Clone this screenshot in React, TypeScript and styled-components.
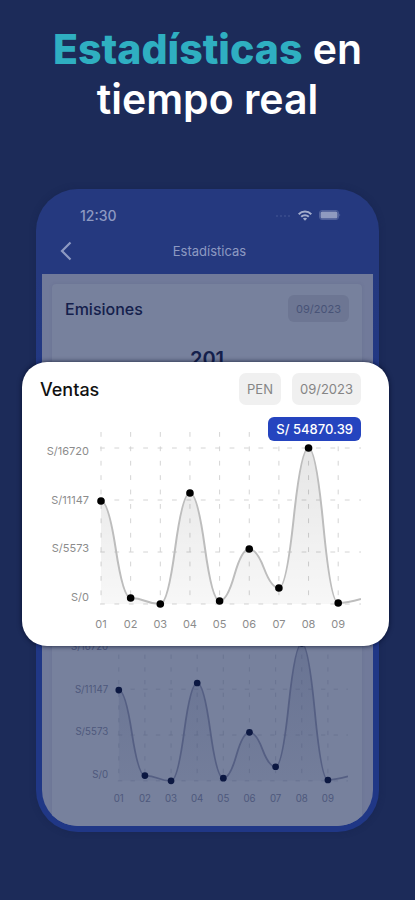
import React, { useId } from "react";
import styled, { createGlobalStyle } from "styled-components";

const GlobalStyle = createGlobalStyle`
  * { box-sizing: border-box; }
  body {
    margin: 0;
    background: #1c2b59;
    font-family: Inter, "Liberation Sans", sans-serif;
  }
  button { font: inherit; border: 0; margin: 0; cursor: pointer; }
`;

const Page = styled.main`
  min-height: 100vh;
  padding: 24px 36px 68px;
  background: #1c2b59;
`;

const Headline = styled.h1`
  margin: 0 -24px 65px;
  color: #fff;
  font-size: 41px;
  line-height: 50px;
  font-weight: 600;
  text-align: center;
`;

const Accent = styled.strong`
  color: #2fafc1;
  font-weight: 800;
`;

const Stage = styled.section`
  position: relative;
`;

const Phone = styled.div`
  padding: 6px;
  border-radius: 42px;
  background: linear-gradient(#25397f 85px, #203786 240px);
  box-shadow: 0 0 6px rgba(20, 32, 72, 0.4);
`;

const Screen = styled.div`
  overflow: hidden;
  border-radius: 36px;
  background: linear-gradient(#25397f 79px, #717a9a 79px);
`;

const TopBar = styled.header`
  height: 79px;
  padding: 8px 32px 0 16px;
  color: #8d99c2;
`;

const StatusBar = styled.div`
  display: flex;
  align-items: center;
  height: 24px;
  padding-left: 22px;
  font-size: 14px;
  font-weight: 500;
`;

const StatusIcons = styled.div`
  display: flex;
  align-items: center;
  gap: 7px;
  margin-left: auto;
`;

const NavBar = styled.div`
  display: grid;
  grid-template-columns: 16px 1fr 16px;
  align-items: center;
  height: 47px;
  margin-right: -20px;
`;

const BackButton = styled.button`
  display: flex;
  padding: 0;
  background: none;
  color: inherit;
`;

const NavTitle = styled.h2`
  margin: 0;
  font-size: 13px;
  font-weight: 400;
  text-align: center;
`;

const Panels = styled.div`
  display: flex;
  flex-direction: column;
  gap: 10px;
  padding: 10px 11px 0 10px;
`;

const Panel = styled.article<{ $kind: "summary" | "chart" }>`
  min-height: ${(p) => (p.$kind === "summary" ? "286px" : "0")};
  padding: ${(p) => (p.$kind === "summary" ? "11px 13px 0" : "36px 14px 20px 13px")};
  border-radius: ${(p) => (p.$kind === "summary" ? "4px" : "4px 4px 0 0")};
  background: #77819d;
  box-shadow: 0 0 3px rgba(90, 100, 135, 0.3);
`;

const PanelHead = styled.div`
  display: flex;
  align-items: center;
`;

const PanelTitle = styled.h3<{ $dim?: boolean }>`
  margin: 0 auto 0 0;
  color: ${(p) => (p.$dim ? "#14204c" : "#111")};
  font-size: ${(p) => (p.$dim ? "16px" : "18px")};
  font-weight: 500;
`;

const Filter = styled.button<{ $dim?: boolean }>`
  height: ${(p) => (p.$dim ? "27px" : "32px")};
  padding: 0 8px;
  border-radius: ${(p) => (p.$dim ? "6px" : "7px")};
  background: ${(p) => (p.$dim ? "#6d7693" : "#f0f0f0")};
  color: ${(p) => (p.$dim ? "#485377" : "#858585")};
  font-size: ${(p) => (p.$dim ? "11px" : "13px")};
`;

const Total = styled.p`
  margin: 23px 0 0;
  color: #14204c;
  font-size: 20px;
  line-height: 28px;
  font-weight: 600;
  text-align: center;
`;

const FeaturedCard = styled.article`
  position: absolute;
  top: 173px;
  left: -14px;
  right: -10px;
  padding: 11px 28px 14px 18px;
  border-radius: 25px;
  background: #fff;
  box-shadow: 0 0 5px rgba(5, 12, 40, 0.85);
`;

const Filters = styled.div`
  display: flex;
  gap: 11px;
`;

const ChartBox = styled.div`
  position: relative;
  margin-top: 12px;
`;

const Tooltip = styled.div`
  position: absolute;
  top: 0;
  right: 0;
  padding: 0 8px;
  border-radius: 6px;
  background: #2544bf;
  color: #fff;
  font-size: 13px;
  line-height: 24px;
  font-weight: 500;
  white-space: nowrap;
`;

const ChartSvg = styled.svg<{ $dim?: boolean }>`
  display: block;
  width: 100%;
  height: auto;
  --ink: ${(p) => (p.$dim ? "#0c1842" : "#000")};
  --label: ${(p) => (p.$dim ? "#4e587c" : "#8c8c8c")};
  --grid: ${(p) => (p.$dim ? "#697391" : "#d4d4d4")};
  --line: ${(p) => (p.$dim ? "#555f83" : "#bdbdbd")};
  --fill: ${(p) => (p.$dim ? "#293766" : "#000")};

  text { fill: var(--label); font-size: 11px; }
  circle { fill: var(--ink); }
`;

const labelsY = [
  { text: "S/16720", y: 38 },
  { text: "S/11147", y: 87 },
  { text: "S/5573", y: 135 },
  { text: "S/0", y: 184 },
];
const gridY = [31, 83, 135, 187];
const sales = [84, 181, 187, 76, 184, 132, 171, 31, 186];
const xs = sales.map((_, i) => 61 + i * 29.65);

function curve(): string {
  let d = `M${xs[0]} ${sales[0]}`;
  for (let i = 0; i < sales.length - 1; i++) {
    const mid = (xs[i] + xs[i + 1]) / 2;
    const midY = (sales[i] + sales[i + 1]) / 2;
    d += ` Q${(xs[i] + mid) / 2} ${sales[i]} ${mid} ${midY}`;
    d += ` Q${(xs[i + 1] + mid) / 2} ${sales[i + 1]} ${xs[i + 1]} ${sales[i + 1]}`;
  }
  return d;
}

const Chart = ({ dim }: { dim?: boolean }) => {
  const gradient = useId();
  const path = curve();
  return (
    <ChartSvg $dim={dim} viewBox="0 0 321 215" role="img" aria-label="Ventas por día">
      <defs>
        <linearGradient id={gradient} x1="0" y1="31" x2="0" y2="187" gradientUnits="userSpaceOnUse">
          <stop offset="0" stopColor="var(--fill)" stopOpacity={dim ? 0.18 : 0.1} />
          <stop offset="1" stopColor="var(--fill)" stopOpacity={dim ? 0.05 : 0.03} />
        </linearGradient>
      </defs>
      <g stroke="var(--grid)" strokeDasharray="4.8 9.6">
        {gridY.map((y) => (
          <line key={y} x1="60" x2="321" y1={y} y2={y} />
        ))}
        {xs.map((x) => (
          <line key={x} x1={x} x2={x} y1="15" y2="187" />
        ))}
      </g>
      <path d={`${path} L${xs[8]} 187 L${xs[0]} 187 Z`} fill={`url(#${gradient})`} />
      <path d={`${path} Q307 186 321 182`} fill="none" stroke="var(--line)" strokeWidth="2" />
      {xs.map((x, i) => (
        <circle key={x} cx={x} cy={sales[i]} r="3.8" />
      ))}
      {labelsY.map((l) => (
        <text key={l.text} x="49" y={l.y} textAnchor="end">{l.text}</text>
      ))}
      {xs.map((x, i) => (
        <text key={x} x={x} y="211" textAnchor="middle">{`0${i + 1}`}</text>
      ))}
    </ChartSvg>
  );
};

export default function App() {
  return (
    <>
      <GlobalStyle />
      <Page>
        <Headline>
          <Accent>Estadísticas</Accent> en
          <br />
          tiempo real
        </Headline>
        <Stage>
          <Phone>
            <Screen>
              <TopBar>
                <StatusBar>
                  12:30
                  <StatusIcons>
                    <svg width="16" height="4" viewBox="0 0 16 4" fill="#4b5c9a">
                      <circle cx="2" cy="3" r="0.8" />
                      <circle cx="6" cy="3" r="0.8" />
                      <circle cx="10" cy="3" r="0.8" />
                      <circle cx="14" cy="3" r="0.8" />
                    </svg>
                    <svg width="14" height="11" viewBox="0 0 14 11" fill="none" stroke="#a3adcc" strokeWidth="2">
                      <path d="M0.7 4.2 C4.2 0.6 9.8 0.6 13.3 4.2" />
                      <path d="M3.2 6.8 C5.3 4.7 8.7 4.7 10.8 6.8" />
                      <path d="M7 10.8 L4.9 8.6 C6.1 7.5 7.9 7.5 9.1 8.6 Z" fill="#a3adcc" stroke="none" />
                    </svg>
                    <svg width="22" height="10" viewBox="0 0 22 10">
                      <rect x="0.5" y="0.5" width="19" height="9" rx="2.5" fill="none" stroke="#4f609b" />
                      <rect x="1.5" y="1.5" width="17" height="7" rx="1.5" fill="#8f9abf" />
                      <path d="M20.5 3.5 Q22 5 20.5 6.5 Z" fill="#6473a8" />
                    </svg>
                  </StatusIcons>
                </StatusBar>
                <NavBar>
                  <BackButton aria-label="Volver">
                    <svg width="16" height="20" viewBox="0 0 16 20" fill="none" stroke="currentColor" strokeWidth="2.2">
                      <path d="M12.5 1.5 L4 10 L12.5 18.5" />
                    </svg>
                  </BackButton>
                  <NavTitle>Estadísticas</NavTitle>
                </NavBar>
              </TopBar>
              <Panels>
                <Panel $kind="summary">
                  <PanelHead>
                    <PanelTitle $dim>Emisiones</PanelTitle>
                    <Filter $dim>09/2023</Filter>
                  </PanelHead>
                  <Total>201</Total>
                </Panel>
                <Panel $kind="chart">
                  <Chart dim />
                </Panel>
              </Panels>
            </Screen>
          </Phone>
          <FeaturedCard>
            <PanelHead>
              <PanelTitle>Ventas</PanelTitle>
              <Filters>
                <Filter>PEN</Filter>
                <Filter>09/2023</Filter>
              </Filters>
            </PanelHead>
            <ChartBox>
              <Chart />
              <Tooltip>S/ 54870.39</Tooltip>
            </ChartBox>
          </FeaturedCard>
        </Stage>
      </Page>
    </>
  );
}
